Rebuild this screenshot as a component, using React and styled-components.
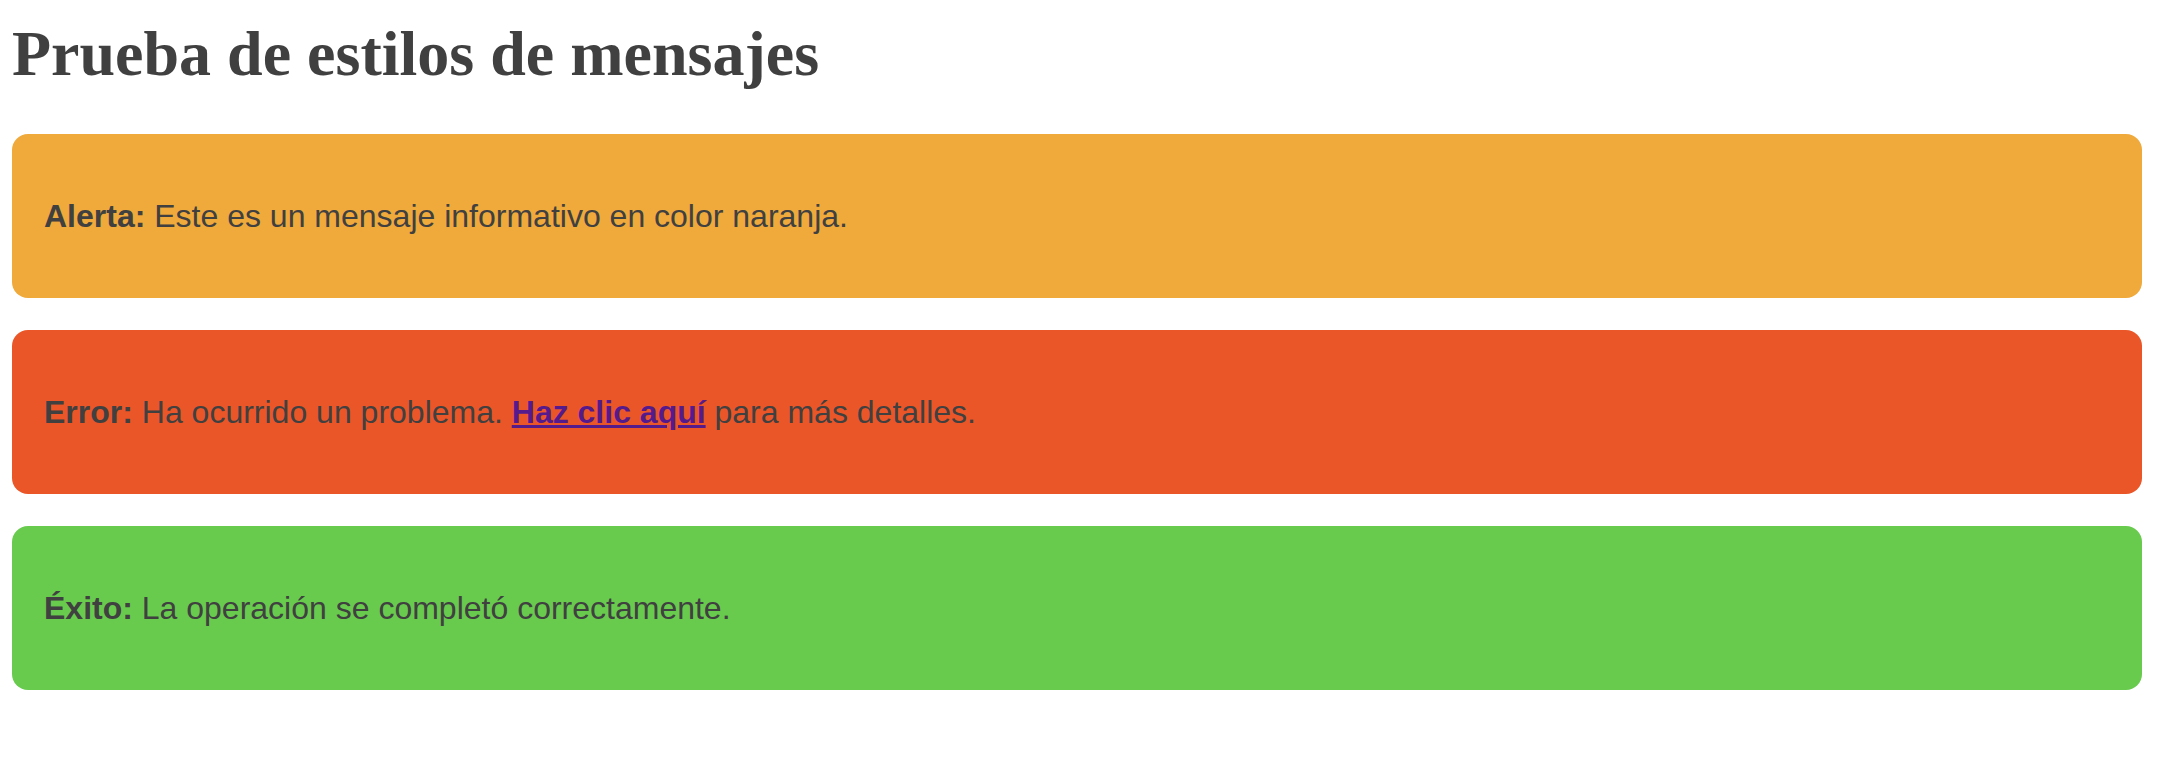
import React from "react";
import styled, { createGlobalStyle } from "styled-components";

const GlobalStyle = createGlobalStyle`
  body {
    margin: 0;
    background: #ffffff;
    color: #404040;
    font-family: "Liberation Sans", Arial, sans-serif;
  }
`;

const Page = styled.div`
  padding: 17px 16px 0 12px;
`;

const Title = styled.h1`
  margin: 0 0 43px;
  font-family: "Liberation Serif", "Times New Roman", serif;
  font-size: 64px;
  font-weight: bold;
  line-height: 1.15;
  color: #404040;
`;

const colors = {
  alert: "#f0a93b",
  error: "#eb5628",
  success: "#68cb4e",
};

const Message = styled.div`
  background-color: ${(props) => colors[props.kind]};
  border-radius: 16px;
  padding: 32px;
  margin-bottom: 32px;
`;

const Text = styled.p`
  margin: 32px 0;
  font-size: 32px;
  line-height: 36px;
  color: #404040;
`;

const Label = styled.strong`
  font-weight: bold;
`;

const DetailLink = styled.a`
  color: #551a8b;
  font-weight: bold;
  text-decoration: underline;
`;

export default function App() {
  return (
    <Page>
      <GlobalStyle />
      <Title>Prueba de estilos de mensajes</Title>
      <Message kind="alert">
        <Text>
          <Label>Alerta:</Label> Este es un mensaje informativo en color naranja.
        </Text>
      </Message>
      <Message kind="error">
        <Text>
          <Label>Error:</Label> Ha ocurrido un problema.{" "}
          <DetailLink href="#">Haz clic aquí</DetailLink> para más detalles.
        </Text>
      </Message>
      <Message kind="success">
        <Text>
          <Label>Éxito:</Label> La operación se completó correctamente.
        </Text>
      </Message>
    </Page>
  );
}
